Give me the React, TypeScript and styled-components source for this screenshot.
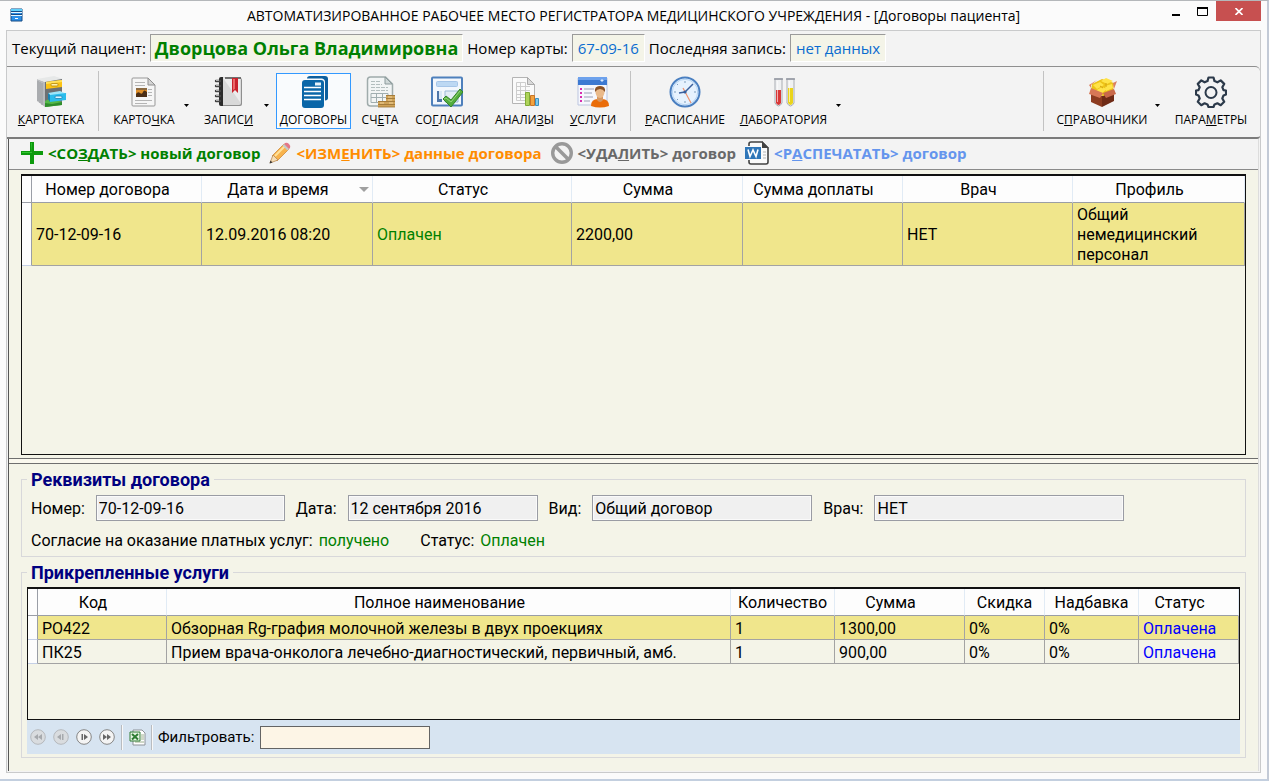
import React from 'react';
import styled, { createGlobalStyle, css } from 'styled-components';

const uiFont = '"Open Sans", "Noto Sans", sans-serif';
const dataFont = 'Roboto, "Liberation Sans", sans-serif';

const GlobalStyle = createGlobalStyle`
  *, *::before, *::after { box-sizing: border-box; }
  body { margin: 0; background: #fbfbfb; color: #000; font-family: ${dataFont}; font-size: 16px; }
  button, input { font: inherit; color: inherit; }
  button { margin: 0; padding: 0; border: 0; background: none; }
`;

/* ---------- window frame ---------- */

const Window = styled.div`
  display: flex;
  flex-direction: column;
  min-height: 100vh;
  padding: 0 6px 6px;
  border-top: 1px solid #b4b7ba;
  border-right: 2px solid #c3cad6;
  border-bottom: 2px solid #c3cfdf;
  background: #fbfbfb;
`;

const TitleBar = styled.header`
  display: grid;
  grid-template-columns: 80px 1fr 80px;
  align-items: start;
  height: 29px;
`;

const TitleIcon = styled.span`
  display: flex;
  padding: 7px 0 0 4px;
`;

const Title = styled.h1`
  margin: 0;
  font: 400 14px/30px ${uiFont};
  text-align: center;
  white-space: nowrap;
`;

const WindowControls = styled.div`
  display: flex;
  justify-content: flex-end;
  height: 20px;
`;

const WindowButton = styled.button<{ $close?: boolean }>`
  display: flex;
  flex: none;
  align-items: center;
  justify-content: center;
  width: ${p => (p.$close ? 45 : 27)}px;
  height: 20px;
  background: ${p => (p.$close ? '#c75050' : 'transparent')};
`;

const Client = styled.main`
  display: flex;
  flex: 1;
  flex-direction: column;
  border: 1px solid #c9cacb;
  background: #f3f3f3;
`;

/* ---------- patient bar ---------- */

const PatientBar = styled.div`
  display: flex;
  align-items: center;
  gap: 4px;
  height: 35px;
  padding: 0 5px 2px;
  font: 400 15px/26px ${uiFont};
  white-space: nowrap;
`;

const Sunken = styled.output<{ $name?: boolean }>`
  height: 28px;
  padding: 0 5px;
  border: 1px solid;
  border-color: #9a9a9a #fff #fff #9a9a9a;
  background: #f4f4e8;
  color: #0a6ccf;
  ${p => p.$name && css`
    padding: 0 4px;
    color: #008000;
    font-size: 18px;
    font-weight: 700;
  `}
`;

/* ---------- main toolbar ---------- */

const Toolbar = styled.nav`
  display: flex;
  align-items: center;
  gap: 3px;
  height: 73px;
  padding: 0 5px 2px;
  border-top: 1px solid #8f8f8f;
  border-bottom: 2px solid #7b7b7b;
  border-radius: 0 5px 3px 0;
  background: #f3f3f3;
`;

const ToolButton = styled.button<{ $w: number; $active?: boolean }>`
  display: flex;
  flex: none;
  flex-direction: column;
  align-items: center;
  gap: 4px;
  width: ${p => p.$w}px;
  height: 56px;
  padding-top: 2px;
  border: 1px solid ${p => (p.$active ? '#3399ff' : 'transparent')};
  background: ${p => (p.$active ? '#f9fbfd' : 'transparent')};
  font: 400 12px/16px ${uiFont};
  white-space: nowrap;
`;

const SplitButton = styled.div`
  display: flex;
  flex: none;
  margin-right: 1px;
`;

const DropButton = styled.button`
  width: 11px;
  height: 56px;
`;

const ToolSeparator = styled.i`
  flex: none;
  width: 1px;
  height: 60px;
  margin: 0 5px;
  background: #c2c2c2;
`;

const Spacer = styled.span`
  flex: 1;
`;

/* ---------- action bar ---------- */

const Page = styled.div`
  display: flex;
  flex: 1;
  flex-direction: column;
  margin: 0 1px 1px;
  border-right: 1px solid #dcdcdc;
  border-left: 1px solid #555;
  background: #f4f4e8;
`;

const ActionBar = styled.div`
  display: flex;
  align-items: center;
  gap: 9px;
  height: 31px;
  padding: 0 12px 2px;
  border-bottom: 1px solid #8a8a8a;
  background: #f3f3f3;
`;

const ActionButton = styled.button<{ $color: string }>`
  display: flex;
  align-items: center;
  gap: 5px;
  color: ${p => p.$color};
  font: 700 15px/24px ${uiFont};
  white-space: nowrap;
`;

/* ---------- grids ---------- */

const ContractsPane = styled.section`
  display: flex;
  flex: 1;
  flex-direction: column;
  padding: 4px 12px 3px;
`;

const GridFrame = styled.div<{ $grow?: boolean }>`
  flex: ${p => (p.$grow ? '1' : 'none')};
  min-height: 133px;
  border: solid #111;
  border-width: 2px 1px 1px;
`;

const Table = styled.table`
  width: 100%;
  border-spacing: 0;
  table-layout: fixed;
`;

const HeadCell = styled.th<{ $sorted?: boolean; $tight?: boolean }>`
  position: relative;
  height: 27px;
  padding: 2px ${p => (p.$tight ? 0 : 18)}px 0 0;
  border-right: 1px solid #e1ebf5;
  border-bottom: 1px solid #9a9ea6;
  background: #fdfdfd;
  font-weight: 400;
  line-height: 24px;
  text-align: center;
  white-space: nowrap;
  ${p => p.$sorted && css`
    &::after {
      content: '';
      position: absolute;
      top: 11px;
      right: 3px;
      border: 5px solid transparent;
      border-top-color: #a0a0a0;
      border-bottom-width: 0;
    }
  `}
`;

const MarkerCell = styled.td<{ $head?: boolean }>`
  padding: 0;
  border-right: 1px solid #9a9ea6;
  border-bottom: 1px solid ${p => (p.$head ? '#9a9ea6' : '#c5d0e6')};
  background: #fdfdfd;
`;

const Cell = styled.td<{ $color?: string }>`
  padding: 2px 4px 0;
  border-right: 1px solid #a3a3a3;
  border-bottom: 1px solid #a3a3a3;
  color: ${p => p.$color ?? '#000'};
  line-height: 20px;
`;

const Row = styled.tr<{ $selected?: boolean }>`
  height: 24px;
  ${p => p.$selected && css`
    ${Cell} { background: #f0e68c; }
  `}
`;

const Splitter = styled.div`
  height: 6px;
  border-top: 1px solid #6f6f6f;
  border-bottom: 1px solid #6f6f6f;
  background: #faf8ee;
`;

/* ---------- detail groups ---------- */

const Details = styled.section`
  display: flex;
  flex-direction: column;
  gap: 5px;
  padding: 5px 12px 13px;
`;

const Group = styled.fieldset<{ $table?: boolean }>`
  min-width: 0;
  margin: 0;
  padding: ${p => (p.$table ? '5px 5px 3px' : '6px 9px 3px')};
  border: 1px solid #d8d8da;
`;

const Legend = styled.legend<{ $table?: boolean }>`
  margin-left: ${p => (p.$table ? 0 : -4)}px;
  padding: 2px 4px 0;
  color: #000080;
  font-size: 18px;
  font-weight: 700;
  line-height: 18px;
`;

const FieldRow = styled.div`
  display: flex;
  align-items: center;
  gap: 11px;
  height: 26px;
  white-space: nowrap;
`;

const Field = styled.label<{ $w: number }>`
  display: flex;
  align-items: center;
  gap: 11px;

  input {
    width: ${p => p.$w}px;
    height: 26px;
    padding: 0 2px;
    border: 1px solid #9a9ca4;
    border-radius: 0;
    outline: 0;
    background: #f0f0f0;
    box-shadow: inset 0 0 0 1px #fafafa;
  }
`;

const StateRow = styled.p`
  display: flex;
  gap: 31px;
  margin: 8px 0 0;
  line-height: 24px;
`;

const Positive = styled.span`
  padding-left: 2px;
  color: #008000;
`;

const Navigator = styled.div`
  display: flex;
  align-items: center;
  gap: 5px;
  height: 34px;
  padding: 0 2px;
  background: #d7e4f1;
`;

const NavButton = styled.button`
  display: flex;
  width: 18px;
  height: 18px;
  align-items: center;
  justify-content: center;
`;

const NavSeparator = styled.i`
  width: 2px;
  height: 25px;
  border-left: 1px solid #b9bcc0;
  border-right: 1px solid #f8f8f8;
`;

const Filter = styled.label`
  display: flex;
  align-items: center;
  gap: 6px;
  font-size: 15px;

  input {
    width: 170px;
    height: 23px;
    padding: 0 4px;
    border: 1px solid #646464;
    border-radius: 0;
    background: #fdf5e6;
  }
`;

/* ---------- icons ---------- */

const Svg = ({ size = 32, children }: { size?: number; children: React.ReactNode }) => (
  <svg width={size} height={size} viewBox={`0 0 ${size} ${size}`} fill="none" aria-hidden="true">{children}</svg>
);

const CabinetIcon = () => (
  <Svg>
    <path d="M2 3 10 6v25l-8-6z" fill="#b9bbbe" />
    <path d="M3 5v20M5 6v21M7 7v22" stroke="#9a9da0" />
    <path d="M2 3 19 0l9 3-18 3z" fill="#e6e8e8" />
    <path d="m10 6 17-3v25l-17 3z" fill="#6d7073" />
    <path d="m11 6 16-2v7l-16 2z" fill="#fbc213" />
    <path d="m11 6 16-2v2L11 8z" fill="#ffe05a" />
    <rect x="16" y="7.500" width="7" height="2.500" rx="1" fill="#fff3b0" stroke="#b58607" strokeWidth=".8" />
    <path d="m10 25 6-3 11 4v3l-17 2z" fill="#55b847" />
    <path d="m10 27 7 1 10-2v3l-17 2z" fill="#2f8c2b" />
    <path d="m13 17 12-2 7 3-16 2z" fill="#9ce6fa" />
    <path d="m15 19 16-2v7l-16 2z" fill="#2bbcec" />
    <path d="m13 17 2 2v7l-2-3z" fill="#1583b5" />
    <rect x="20" y="20" width="7" height="2.500" rx="1" fill="#dcf6ff" stroke="#1583b5" strokeWidth=".8" />
  </Svg>
);

const CardIcon = () => (
  <Svg>
    <path d="M4 3q0-1 1-1h15l7 7v20q0 1-1 1H5q-1 0-1-1z" fill="#f6f6f6" stroke="#979797" />
    <path d="M20 2v7h7z" fill="#d4d4d4" stroke="#8e8e8e" />
    <path d="M7 6.500h10M7 9.500h10M20 13.500h4M20 16.500h4M20 19.500h4M7 24.500h17M7 27.500h12" stroke="#b5b5b5" />
    <rect x="8" y="12" width="11" height="9" fill="#e0902a" />
    <path d="M8 18q2-3 4-1t3-1 4 0v5H8z" fill="#4c2f17" />
    <path d="M8 12h11v2H8z" fill="#8c6a40" />
  </Svg>
);

const JournalIcon = () => (
  <Svg>
    <rect x="7" y="2" width="22" height="28" rx="2" fill="#8f8f8f" />
    <rect x="7" y="1" width="21" height="28" rx="2" fill="#d9d9d9" />
    <path d="M10 2h17v24z" fill="#ececec" />
    <path d="M6 3q0-2 2-2h2v29H8q-2 0-2-2z" fill="#2b2b2b" />
    <path d="M12 2h16" stroke="#4a4a4a" strokeWidth="1.500" />
    <path d="M19 2h6v15l-3-3-3 3z" fill="#c9232d" />
    <path d="M20 3h2v10l-2 1z" fill="#ea6a6a" />
    <path d="M3 5h4M3 10h4M3 15h4M3 20h4M3 25h4" stroke="#444" strokeWidth="2.400" strokeLinecap="round" />
    <path d="M3 4.500h3M3 9.500h3M3 14.500h3M3 19.500h3M3 24.500h3" stroke="#ccc" strokeWidth=".8" />
  </Svg>
);

const ContractsIcon = () => (
  <Svg>
    <path d="M9 2.500q0-2.500 3-2.500h15q3 0 3 3v19q0 2-3 2.500V6q0-3-3-3.500z" fill="#0d5f9e" />
    <path d="M7 4h16q3 0 3 3v22q0 3-3 3H7q-3 0-3-3V7q0-3 3-3z" fill="#0a66a8" />
    <path d="M6 11.500h17M6 15.500h17M6 19.500h17M6 23.500h17" stroke="#fff" strokeWidth="1.600" />
    <path d="M17 6.500h6v3h-6z" fill="#e8f3fa" />
  </Svg>
);

const InvoiceIcon = () => (
  <Svg>
    <path d="M3.500 4q0-3 3-3h15l7 7v20q0 2-2 2h-20q-3 0-3-3z" fill="#f2f5f5" stroke="#9fabab" strokeWidth="1.500" />
    <path d="M21 1v7h7z" fill="#cfd8d8" stroke="#8d9b9c" />
    <path d="M7 5.500h9M7 8.500h11M7 11.500h17M7 14.500h17" stroke="#b3bebe" strokeDasharray="4 1" />
    <path d="M7 17.500h17v9H7zM7 21.500h17M12.500 17v10M18.500 17v10" stroke="#a0aeb0" />
    <path d="M22 19h9v12h-9zM14 25h8v6h-8z" fill="#cfa257" />
    <path d="M22 19.500h9M22 22.500h9M22 25.500h9M14 25.500h8M14 28.500h17M14 31h17" stroke="#9a7234" strokeWidth=".8" />
    <path d="M24 21h4M24 24h4M25 27h4M16 27h4" stroke="#efd199" />
  </Svg>
);

const ConsentIcon = () => (
  <Svg>
    <rect x="1" y="1.500" width="30" height="28" rx="1" fill="#f2f7fd" stroke="#4e80bc" strokeWidth="2" />
    <rect x="5.500" y="5.500" width="21" height="5" rx="1" fill="#bcd8f3" stroke="#a5c5e8" />
    <rect x="6" y="15" width="5" height="11" fill="#4c75a9" />
    <path d="M8 15v8h3v-8z" fill="#d9e8f6" />
    <path d="M14 15h13v11H14z" fill="#e2ecf7" stroke="#9ebbd8" />
    <path d="m12 23 3-3 5 4 9-11 3 3-12 15z" fill="#52ad3d" stroke="#35842a" />
    <path d="m13 23 2-1 5 4 9-11" stroke="#96d77d" />
  </Svg>
);

const AnalysisIcon = () => (
  <Svg>
    <path d="M3.500 1.500h15l7 7v19h-22z" fill="#fafafa" stroke="#b4b4b4" />
    <path d="M18.500 1.500v7h7z" fill="#d9d9d9" stroke="#aaa" />
    <path d="M7.500 6.500h9v18h-9zM7 10.500h14M7 14.500h14M7 18.500h12M7 21.500h12M11.500 6v18" stroke="#cdcdcd" />
    <path d="M16.500 16.500h4v13h-4z" fill="#aed35a" stroke="#7fab35" />
    <path d="M21.500 19.500h4v10h-4z" fill="#f3a33e" stroke="#c97426" />
    <path d="M26.500 22.500h3v7h-3z" fill="#7cc8ee" stroke="#3f90bd" />
  </Svg>
);

const ServicesIcon = () => (
  <Svg>
    <path d="M1 2h29v27H1z" fill="#f6f7fd" stroke="#bbc5df" />
    <path d="M1 1h29v8H1z" fill="#3c79d2" />
    <path d="M1 1h29v3H1z" fill="#6da1ec" />
    <path d="M25 3v3M23.500 4.500h3" stroke="#d8eaff" />
    <path d="M3 13h2M3 17h2M3 21h2M3 25h2" stroke="#d82daf" strokeWidth="2" />
    <path d="M7 13h10M7 17h8M7 21h9M7 25h6" stroke="#9b9fb5" strokeWidth="1.200" />
    <path d="M14 30q0-7 7-7h4q7 0 7 7-9 3-18 0z" fill="#ea6c09" />
    <path d="M20 20h6v4q-3 4-6 0z" fill="#d79761" />
    <ellipse cx="23" cy="16" rx="4.500" ry="6" fill="#eab98a" />
    <path d="M18 16q-1-6 5-6t5 6q-2-3-5-3t-5 3z" fill="#8a5228" />
  </Svg>
);

const ClockIcon = () => (
  <Svg>
    <circle cx="16" cy="16" r="14.500" fill="#e6f2fe" stroke="#4a7fc0" strokeWidth="2" />
    <circle cx="16" cy="16" r="12.700" stroke="#b4d4f4" />
    <path d="M16 5v2M16 25v2M5 16h2M25 16h2M8 8l1 1M24 8l-1 1M8 24l1-1" stroke="#7d9dbd" />
    <path d="m16 16 8-8M16 16l-6 1" stroke="#3c609c" strokeWidth="1.500" />
    <path d="m14 12 8 15" stroke="#f0926c" strokeWidth="1.200" />
    <circle cx="16" cy="16" r="1.600" fill="#345d9d" />
  </Svg>
);

const TubesIcon = () => (
  <Svg>
    <path d="M7 3h7v24q-3.500 6-7 0z" fill="#f0f1f2" stroke="#a9adb3" />
    <path d="M19 3h7v24q-3.500 6-7 0z" fill="#f0f1f2" stroke="#a9adb3" />
    <path d="M6 3h9M18 3h9" stroke="#9297a1" strokeWidth="1.500" />
    <path d="M8 14h5v13q-2.500 4-5 0z" fill="#d93838" />
    <path d="M20 12h5v15q-2.500 4-5 0z" fill="#ead41a" />
    <path d="M9.500 5v21M21.500 5v21" stroke="#fff" strokeOpacity=".6" />
  </Svg>
);

const BoxIcon = () => (
  <Svg>
    <path d="m5 15 11 5v11L5 26z" fill="#8d3c20" />
    <path d="m16 20 12-5v10l-12 6z" fill="#6f2b16" />
    <path d="m6 8 10-5 12 4-1 9-10 4-12-5z" fill="#edc317" />
    <path d="m7 9 7-3 4 3-7 4zM15 5l5-3 7 3-6 3zM9 15l7-4 5 2-6 5zM19 10l7-2 1 4-7 3z" fill="#ffe348" />
    <path d="m7 14 5 2M20 7v4M14 10l3 2" stroke="#d3a010" />
    <path d="m5 12 12 5-3 5-11-4z" fill="#d77856" />
    <path d="m17 17 11-4 2 5-10 4z" fill="#c9694a" />
    <path d="m5 12-2-3 8-5-6 5zM27 7l4-2-3 8z" fill="#db8060" />
  </Svg>
);

const GearIcon = () => (
  <Svg>
    <path
      d="M13.500 1.500h5l1 3.600 2.900 1.200 3.300-1.900 3.500 3.500-1.900 3.300 1.200 2.900 2.500.4v4l-2.500 1-1.200 2.900 1.900 3.300-3.500 3.500-3.300-1.900-2.900 1.200-1 2.500h-5l-1-2.500-2.900-1.200-3.300 1.900-3.500-3.500 1.900-3.300-1.200-2.900-2.500-1v-4l2.500-.4 1.200-2.900-1.900-3.300 3.500-3.500 3.300 1.900 2.900-1.200z"
      stroke="#2c3a4a" strokeWidth="2.200" strokeLinejoin="round"
    />
    <circle cx="16" cy="16.500" r="5.500" stroke="#2c3a4a" strokeWidth="2" />
  </Svg>
);

const ArrowIcon = () => (
  <svg width="5" height="3" viewBox="0 0 5 3" aria-hidden="true"><path d="M0 0h5L2.500 3z" /></svg>
);

const PlusIcon = () => (
  <Svg size={22}>
    <path d="M9 0h4v9h9v4h-9v9H9v-9H0V9h9z" fill="#0d9a0d" />
    <path d="M10 1h1v9H1v1h10z" fill="#2fc52f" />
  </Svg>
);

const PencilIcon = () => (
  <Svg size={22}>
    <path d="m3 14 12-12 5 5L8 19z" fill="#f8b34c" stroke="#cf8a3a" strokeWidth=".8" />
    <path d="m4 13 5 5-8 3z" fill="#f5ddb6" stroke="#b98a54" strokeWidth=".8" />
    <path d="m.5 21.500 1-3 2 2z" fill="#3c3936" />
    <path d="M6 14 16 4" stroke="#ffe29a" strokeWidth="2" />
    <path d="m15 2 1-1q2-1 4 1t1 4l-1 1z" fill="#e37887" />
    <path d="m13.500 3.500 1.500-1.500 5 5-1.500 1.500z" fill="#c3c9ce" />
  </Svg>
);

const BanIcon = () => (
  <Svg size={22}>
    <circle cx="11" cy="11" r="9.300" stroke="#999" strokeWidth="3.400" />
    <path d="m5 5 12 12" stroke="#999" strokeWidth="3.500" />
  </Svg>
);

const WordIcon = () => (
  <Svg size={24}>
    <path d="M6 1h11l6 6v14q0 2-2 2H6q-2 0-2-2V3q0-2 2-2z" fill="#fafafa" stroke="#434343" strokeWidth="1.600" />
    <path d="M17 0v7h7z" fill="#434343" />
    <path d="M18 11h3M18 14h3M18 17h3" stroke="#b5b5b5" />
    <path d="M0 5h17v14H0z" fill="#fafafa" />
    <path d="M0 6h16v12H0z" fill="#2f76b8" />
    <path d="m3 8.500 2 7 3-6.500 3 6.500 2-7" stroke="#fff" strokeWidth="1.600" />
  </Svg>
);

const AppIcon = () => (
  <Svg size={14}>
    <path d="M1 1h11v12H1z" fill="#2b8fe8" stroke="#174b84" />
    <path d="M1 1h11v3H1z" fill="#5ed0fb" />
    <path d="M1 4.500h11M1 7.500h11" stroke="#e6f6ff" />
    <path d="M1 3.500h11M1 6.500h11" stroke="#174b84" />
    <path d="M5 10.500h3" stroke="#fff" />
  </Svg>
);

const ExcelIcon = () => (
  <Svg size={17}>
    <path d="M4 1h9l3 3v12H4z" fill="#fff" stroke="#8d9298" />
    <path d="M12 6h3M12 8h3M12 10h3M6 13h9" stroke="#9db08e" />
    <path d="M1 3h10v9H1z" fill="#e8f5e5" stroke="#2e7d32" />
    <path d="m3 5 6 5.500M9 5l-6 5.500" stroke="#2e7d32" strokeWidth="2" />
  </Svg>
);

const RoundIcon = ({ d, off }: { d: string; off?: boolean }) => (
  <Svg size={16}>
    <circle cx="8" cy="8" r="7.300" fill={off ? '#d9dcdf' : '#f4f4f4'} stroke={off ? '#b5b8bc' : '#858585'} />
    <path d={d} fill={off ? '#a6a9ad' : '#666'} />
  </Svg>
);

/* ---------- small building blocks ---------- */

/** Renders a caption whose accelerator letter follows an ampersand. */
const Caption = ({ text }: { text: string }) => {
  const at = text.indexOf('&');
  if (at < 0) return <span>{text}</span>;
  return <span>{text.slice(0, at)}<u>{text[at + 1]}</u>{text.slice(at + 2)}</span>;
};

type ToolProps = { text: string; w: number; icon: React.ReactNode; active?: boolean; menu?: boolean };

const Tool = ({ text, w, icon, active, menu }: ToolProps) => {
  const button = (
    <ToolButton type="button" $w={w} $active={active} aria-pressed={active}>
      {icon}
      <Caption text={text} />
    </ToolButton>
  );
  if (!menu) return button;
  return (
    <SplitButton>
      {button}
      <DropButton type="button" aria-label={`${text.replace('&', '')}: меню`}><ArrowIcon /></DropButton>
    </SplitButton>
  );
};

type Column = { title: string; w: number; sorted?: boolean; tight?: boolean; color?: string };

const DataGrid = ({ marker, columns, rows }: { marker: number; columns: Column[]; rows: string[][] }) => (
  <Table>
    <colgroup>
      <col width={marker} />
      {columns.map(c => <col key={c.title} width={c.w} />)}
    </colgroup>
    <thead>
      <tr>
        <MarkerCell $head />
        {columns.map(c => (
          <HeadCell key={c.title} scope="col" $sorted={c.sorted} $tight={c.tight}>{c.title}</HeadCell>
        ))}
      </tr>
    </thead>
    <tbody>
      {rows.map((row, i) => (
        <Row key={row[0]} $selected={i === 0}>
          <MarkerCell />
          {row.map((value, j) => <Cell key={columns[j].title} $color={columns[j].color}>{value}</Cell>)}
        </Row>
      ))}
    </tbody>
  </Table>
);

const contractColumns: Column[] = [
  { title: 'Номер договора', w: 170 },
  { title: 'Дата и время', w: 171, sorted: true },
  { title: 'Статус', w: 199, color: '#008000' },
  { title: 'Сумма', w: 171 },
  { title: 'Сумма доплаты', w: 160 },
  { title: 'Врач', w: 170 },
  { title: 'Профиль', w: 172 },
];

const contractRows = [
  ['70-12-09-16', '12.09.2016 08:20', 'Оплачен', '2200,00', '', 'НЕТ', 'Общий немедицинский персонал'],
];

const serviceColumns: Column[] = [
  { title: 'Код', w: 129 },
  { title: 'Полное наименование', w: 564 },
  { title: 'Количество', w: 104, tight: true },
  { title: 'Сумма', w: 130 },
  { title: 'Скидка', w: 80, tight: true },
  { title: 'Надбавка', w: 94, tight: true },
  { title: 'Статус', w: 100, color: '#0000ff' },
];

const serviceRows = [
  ['РО422', 'Обзорная Rg-графия молочной железы в двух проекциях', '1', '1300,00', '0%', '0%', 'Оплачена'],
  ['ПК25', 'Прием врача-онколога лечебно-диагностический, первичный, амб.', '1', '900,00', '0%', '0%', 'Оплачена'],
];

export default function App() {
  return (
    <>
      <GlobalStyle />
      <Window>
        <TitleBar>
          <TitleIcon><AppIcon /></TitleIcon>
          <Title>АВТОМАТИЗИРОВАННОЕ РАБОЧЕЕ МЕСТО РЕГИСТРАТОРА МЕДИЦИНСКОГО УЧРЕЖДЕНИЯ - [Договоры пациента]</Title>
          <WindowControls>
            <WindowButton type="button" aria-label="Свернуть">
              <svg width="8" height="10"><path d="M0 9h8" stroke="#000" strokeWidth="2" /></svg>
            </WindowButton>
            <WindowButton type="button" aria-label="Развернуть">
              <svg width="11" height="9"><path d="M.5 1v7.500h10V1" stroke="#000" fill="none" /><path d="M0 1h11" stroke="#000" strokeWidth="2" /></svg>
            </WindowButton>
            <WindowButton type="button" $close aria-label="Закрыть">
              <svg width="8" height="7"><path d="m.5 0 7 7M7.500 0l-7 7" stroke="#fff" strokeWidth="1.600" /></svg>
            </WindowButton>
          </WindowControls>
        </TitleBar>

        <Client>
          <PatientBar>
            <span>Текущий пациент:</span>
            <Sunken $name>Дворцова Ольга Владимировна</Sunken>
            <span>Номер карты:</span>
            <Sunken>67-09-16</Sunken>
            <span>Последняя запись:</span>
            <Sunken>нет данных</Sunken>
          </PatientBar>

          <Toolbar>
            <Tool text="&КАРТОТЕКА" w={78} icon={<CabinetIcon />} />
            <ToolSeparator />
            <Tool text="КАРТО&ЧКА" w={74} icon={<CardIcon />} menu />
            <Tool text="ЗАПИС&И" w={65} icon={<JournalIcon />} menu />
            <Tool text="&ДОГОВОРЫ" w={75} icon={<ContractsIcon />} active />
            <Tool text="СЧ&ЕТА" w={52} icon={<InvoiceIcon />} />
            <Tool text="СО&ГЛАСИЯ" w={76} icon={<ConsentIcon />} />
            <Tool text="АНАЛИ&ЗЫ" w={73} icon={<AnalysisIcon />} />
            <Tool text="&УСЛУГИ" w={58} icon={<ServicesIcon />} />
            <ToolSeparator />
            <Tool text="&РАСПИСАНИЕ" w={92} icon={<ClockIcon />} />
            <Tool text="&ЛАБОРАТОРИЯ" w={99} icon={<TubesIcon />} menu />
            <Spacer />
            <ToolSeparator />
            <Tool text="С&ПРАВОЧНИКИ" w={100} icon={<BoxIcon />} menu />
            <Tool text="ПАРА&МЕТРЫ" w={88} icon={<GearIcon />} />
          </Toolbar>

          <Page>
            <ActionBar>
              <ActionButton type="button" $color="#008000"><PlusIcon /><Caption text="<СО&ЗДАТЬ> новый договор" /></ActionButton>
              <ActionButton type="button" $color="#ff8c00"><PencilIcon /><Caption text="<ИЗМ&ЕНИТЬ> данные договора" /></ActionButton>
              <ActionButton type="button" $color="#696969"><BanIcon /><Caption text="<УДА&ЛИТЬ> договор" /></ActionButton>
              <ActionButton type="button" $color="#6495ed"><WordIcon /><Caption text="<Р&АСПЕЧАТАТЬ> договор" /></ActionButton>
            </ActionBar>

            <ContractsPane>
              <GridFrame $grow>
                <DataGrid marker={10} columns={contractColumns} rows={contractRows} />
              </GridFrame>
            </ContractsPane>

            <Splitter />

            <Details>
              <Group>
                <Legend>Реквизиты договора</Legend>
                <FieldRow>
                  <Field $w={189}>Номер:<input readOnly value="70-12-09-16" /></Field>
                  <Field $w={190}>Дата:<input readOnly value="12 сентября 2016" /></Field>
                  <Field $w={220}>Вид:<input readOnly value="Общий договор" /></Field>
                  <Field $w={250}>Врач:<input readOnly value="НЕТ" /></Field>
                </FieldRow>
                <StateRow>
                  <span>Согласие на оказание платных услуг: <Positive>получено</Positive></span>
                  <span>Статус: <Positive>Оплачен</Positive></span>
                </StateRow>
              </Group>

              <Group $table>
                <Legend $table>Прикрепленные услуги</Legend>
                <GridFrame>
                  <DataGrid marker={10} columns={serviceColumns} rows={serviceRows} />
                </GridFrame>
                <Navigator>
                  <NavButton type="button" disabled aria-label="Первая запись"><RoundIcon off d="M8 5v6L4 8zM12 5v6L8 8z" /></NavButton>
                  <NavButton type="button" disabled aria-label="Предыдущая запись"><RoundIcon off d="M8 5v6L4 8zM9 5h1.500v6H9z" /></NavButton>
                  <NavButton type="button" aria-label="Следующая запись"><RoundIcon d="M8 5v6l4-3zM5.500 5H7v6H5.500z" /></NavButton>
                  <NavButton type="button" aria-label="Последняя запись"><RoundIcon d="M4 5v6l4-3zM8 5v6l4-3z" /></NavButton>
                  <NavSeparator />
                  <NavButton type="button" aria-label="Экспорт в Excel"><ExcelIcon /></NavButton>
                  <NavSeparator />
                  <Filter>Фильтровать:<input type="text" /></Filter>
                </Navigator>
              </Group>
            </Details>
          </Page>
        </Client>
      </Window>
    </>
  );
}
